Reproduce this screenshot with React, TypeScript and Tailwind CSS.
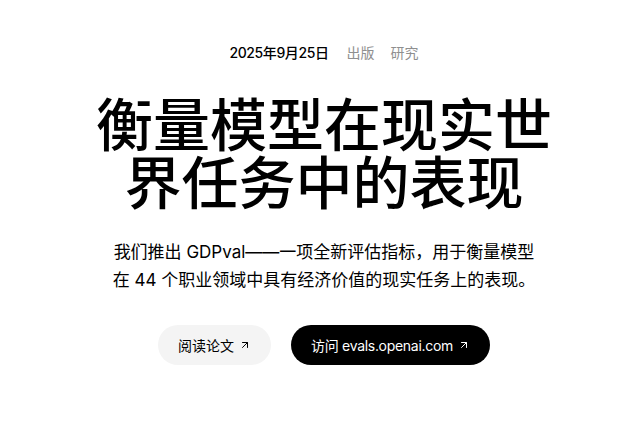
import { ArrowUpRight } from 'lucide-react'

const FONT = "font-['Inter','Noto_Sans_CJK_SC',sans-serif]"

export default function App() {
  return (
    <div className={`${FONT} flex h-[431px] w-full flex-col items-center bg-white pl-[8px] text-black`}>
      {/* Meta line */}
      <div className="mt-[43px] flex items-center gap-[16px] text-[14px] leading-[20px]">
        <span className="mr-[2px] font-medium tracking-[-0.4px]">2025年9月25日</span>
        <span className="text-[#8f8f8f]">出版</span>
        <span className="text-[#8f8f8f]">研究</span>
      </div>

      {/* Title */}
      <h1 className="mt-[34px] w-[480px] text-center text-[57px] font-medium leading-[58px]">
        衡量模型在现实世界任务中的表现
      </h1>

      {/* Description */}
      <p className="mt-[25px] w-[460px] text-center text-[17px] leading-[28px]">
        我们推出 GDPval——一项全新评估指标，用于衡量模型
        <br />
        在 44 个职业领域中具有经济价值的现实任务上的表现。
      </p>

      {/* Actions */}
      <div className="mt-[31px] flex items-center gap-[20px] text-[14px]">
        <button className="flex h-[40px] items-center gap-[5px] rounded-full bg-[#f4f4f4] px-[20px]">
          阅读论文
          <ArrowUpRight size={12} strokeWidth={2} />
        </button>
        <button className="flex h-[40px] items-center gap-[5px] rounded-full bg-black px-[20px] tracking-[-0.3px] text-white">
          访问 evals.openai.com
          <ArrowUpRight size={12} strokeWidth={2} />
        </button>
      </div>
    </div>
  )
}
